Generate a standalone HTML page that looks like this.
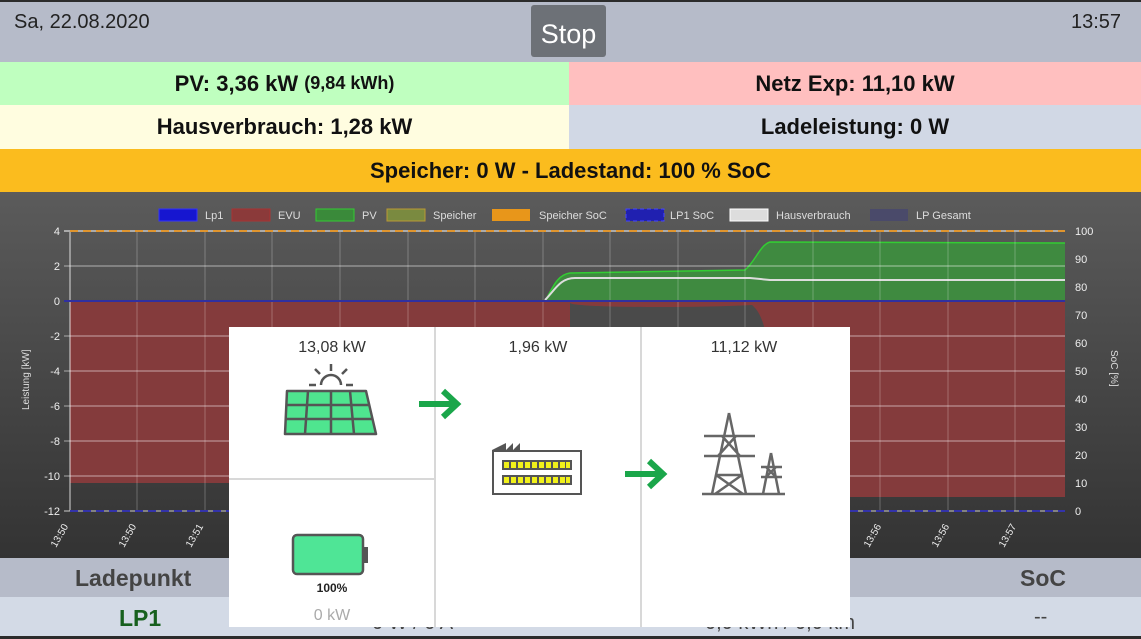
<!DOCTYPE html>
<html><head><meta charset="utf-8"><style>
*{margin:0;padding:0;box-sizing:border-box}
body{width:1141px;height:639px;overflow:hidden;background:#2b2b2b;font-family:"Liberation Sans",sans-serif;position:relative}
.abs{position:absolute}
.hdr{left:0;top:2px;width:1141px;height:60px;background:#b6bbc9}
.row{display:flex;align-items:center;justify-content:center;font-weight:bold;font-size:22px;color:#111}
</style></head><body>
<div class="abs hdr"></div>
<div class="abs" style="left:14px;top:11px;font-size:20px;color:#222">Sa, 22.08.2020</div>
<div class="abs" style="left:1071px;top:11px;font-size:20px;color:#222">13:57</div>
<div class="abs" style="left:531px;top:5px;width:75px;height:52px;background:#6d7177;border-radius:3px;color:#fff;font-size:27px;text-align:center;line-height:58px">Stop</div>
<div class="abs row" style="left:0;top:62px;width:569px;height:43px;background:#bfffbf">PV: 3,36 kW&nbsp;<span style="font-size:18px">(9,84 kWh)</span></div>
<div class="abs row" style="left:569px;top:62px;width:572px;height:43px;background:#ffbfbf">Netz Exp: 11,10 kW</div>
<div class="abs row" style="left:0;top:105px;width:569px;height:44px;background:#fffde0">Hausverbrauch: 1,28 kW</div>
<div class="abs row" style="left:569px;top:105px;width:572px;height:44px;background:#d1d8e5">Ladeleistung: 0 W</div>
<div class="abs row" style="left:0;top:149px;width:1141px;height:43px;background:#fbbc1e">Speicher: 0 W - Ladestand: 100 % SoC</div>

<svg class="abs" style="left:0;top:192px" width="1141" height="366" viewBox="0 192 1141 366" font-family="Liberation Sans, sans-serif">
<defs><linearGradient id="g" x1="0" y1="0" x2="0" y2="1"><stop offset="0" stop-color="#5b5b5b"/><stop offset="1" stop-color="#333"/></linearGradient></defs>
<rect x="0" y="192" width="1141" height="366" fill="url(#g)"/>
<g font-size="11" fill="#ddd">
<rect x="159" y="209" width="38" height="12" fill="#1616d0" stroke="#33f"/><text x="205" y="219">Lp1</text>
<rect x="232" y="209" width="38" height="12" fill="#8b3a3a" stroke="#a33"/><text x="278" y="219">EVU</text>
<rect x="316" y="209" width="38" height="12" fill="#3a8a3a" stroke="#3c3"/><text x="362" y="219">PV</text>
<rect x="387" y="209" width="38" height="12" fill="#7a8a40" stroke="#b93"/><text x="433" y="219">Speicher</text>
<rect x="492" y="209" width="38" height="12" fill="#e8961a"/><text x="539" y="219">Speicher SoC</text>
<rect x="626" y="209" width="38" height="12" fill="#2020b0" stroke="#44f" stroke-dasharray="4 3"/><text x="670" y="219">LP1 SoC</text>
<rect x="730" y="209" width="38" height="12" fill="#ddd" stroke="#fff"/><text x="776" y="219">Hausverbrauch</text>
<rect x="870" y="209" width="38" height="12" fill="#4a4a6a"/><text x="916" y="219">LP Gesamt</text>
</g>
<path d="M70 301 H1065 V497 L770 497 C765 490 762 485 755 483 L70 483 Z" fill="#843b3c"/>
<path d="M570 303 C575 308 700 308 752 305 C758 310 762 318 765 330 L570 330 Z" fill="#4a4a4a"/>
<path d="M70 301 L545 301 C552 290 556 275 570 273 L745 270 C755 262 760 245 770 242 L1065 243 V301 Z" fill="#3f8a40"/>
<path d="M545 301 C552 290 556 275 570 273 L745 270 C755 262 760 245 770 242 L1065 243" fill="none" stroke="#3c3" stroke-width="1.5"/>
<path d="M545 300 C555 290 560 278 575 278 L750 278 L770 280 L1065 280" fill="none" stroke="#ddd" stroke-width="2"/>
<g stroke="#fff" stroke-opacity=".25">
<path d="M137 232V511M205 232V511M272 232V511M340 232V511M408 232V511M475 232V511M543 232V511M610 232V511M678 232V511M745 232V511M813 232V511M880 232V511M948 232V511M1015 232V511"/>
</g>
<g stroke="#fff" stroke-opacity=".55"><path d="M64 266H1065M64 336H1065M64 371H1065M64 406H1065M64 441H1065M64 476H1065"/></g>
<path d="M70 232V511" stroke="#fff" stroke-opacity=".8"/>
<path d="M64 231H1065" stroke="#fff"/><path d="M70 231H1065" stroke="#e0952e" stroke-width="2" stroke-dasharray="8 5"/>
<path d="M64 301H1065" stroke="#3030a0" stroke-width="2"/>
<path d="M64 511H1065" stroke="#ccc"/><path d="M70 511H1065" stroke="#3333aa" stroke-width="2" stroke-dasharray="8 5"/>
<g font-size="11" fill="#eee" text-anchor="end">
<text x="60" y="235">4</text><text x="60" y="270">2</text><text x="60" y="305">0</text><text x="60" y="340">-2</text><text x="60" y="375">-4</text><text x="60" y="410">-6</text><text x="60" y="445">-8</text><text x="60" y="480">-10</text><text x="60" y="515">-12</text>
</g>
<g font-size="11" fill="#eee">
<text x="1075" y="235">100</text><text x="1075" y="263">90</text><text x="1075" y="291">80</text><text x="1075" y="319">70</text><text x="1075" y="347">60</text><text x="1075" y="375">50</text><text x="1075" y="403">40</text><text x="1075" y="431">30</text><text x="1075" y="459">20</text><text x="1075" y="487">10</text><text x="1075" y="515">0</text>
</g>
<text transform="translate(29 410) rotate(-90)" font-size="10" fill="#ddd">Leistung [kW]</text>
<text transform="translate(1111 350) rotate(90)" font-size="10" fill="#ddd">SoC [%]</text>
<g font-size="10" fill="#eee">
<text transform="translate(56 548) rotate(-60)">13:50</text>
<text transform="translate(124 548) rotate(-60)">13:50</text>
<text transform="translate(191 548) rotate(-60)">13:51</text>
<text transform="translate(869 548) rotate(-60)">13:56</text>
<text transform="translate(937 548) rotate(-60)">13:56</text>
<text transform="translate(1004 548) rotate(-60)">13:57</text>
</g>
</svg>

<div class="abs" style="left:0;top:558px;width:1141px;height:39px;background:#b6bbc9"></div>
<div class="abs" style="left:0;top:597px;width:1141px;height:39px;background:#d3dae6"></div>
<div class="abs" style="left:75px;top:565px;font-size:23px;font-weight:bold;color:#444">Ladepunkt</div>
<div class="abs" style="left:1020px;top:565px;font-size:23px;font-weight:bold;color:#444">SoC</div>
<div class="abs" style="left:119px;top:605px;font-size:23px;font-weight:bold;color:#17601e">LP1</div>
<div class="abs" style="left:1034px;top:606px;font-size:20px;color:#444">--</div>
<div class="abs" style="left:372px;top:612px;font-size:20px;color:#444">0 W / 0 A</div>
<div class="abs" style="left:705px;top:612px;font-size:20px;color:#444">0,0 kWh / 0,0 km</div>

<svg class="abs" style="left:229px;top:327px" width="621" height="300" viewBox="0 0 621 300" font-family="Liberation Sans, sans-serif">
<rect width="621" height="300" fill="#fff"/>
<path d="M206 0V300M412 0V300M0 152H206" stroke="#d8d8d8" stroke-width="2"/>
<g font-size="16" fill="#333" text-anchor="middle">
<text x="103" y="25">13,08 kW</text><text x="309" y="25">1,96 kW</text><text x="515" y="25">11,12 kW</text>
</g>
<g stroke="#555" stroke-width="2.5" fill="none">
<path d="M92 58A10 10 0 0 1 112 58"/>
<path d="M102 37V44M86 42L91 47M118 42L113 47M80 58H87M117 58H124"/>
</g>
<path d="M58 64H137L147 107H56Z" fill="#4fe58f" stroke="#555" stroke-width="2.5" stroke-linejoin="round"/>
<path d="M58 78H140M57 92H143M79 64L76 107M102 64V107M121 64L125 107" stroke="#555" stroke-width="2.5"/>
<g fill="none" stroke="#1aa64a" stroke-width="6"><path d="M190 77H226M214 64L228 77L214 90"/><path d="M396 147H432M420 134L434 147L420 160"/></g>
<path d="M263 123L277 116V123L284 116V123L291 116V123H293V124H263Z" fill="#555"/>
<rect x="264" y="124" width="88" height="43" fill="#fff" stroke="#555" stroke-width="2"/>
<rect x="273" y="133" width="70" height="10" fill="#555"/>
<rect x="273" y="148" width="70" height="10" fill="#555"/>
<g fill="#f1f11a">
<path d="M275 135h5v6h-5zM282 135h5v6h-5zM289 135h5v6h-5zM296 135h5v6h-5zM303 135h5v6h-5zM310 135h5v6h-5zM317 135h5v6h-5zM324 135h5v6h-5zM331 135h5v6h-5zM337 135h4v6h-4z"/>
<path d="M275 150h5v6h-5zM282 150h5v6h-5zM289 150h5v6h-5zM296 150h5v6h-5zM303 150h5v6h-5zM310 150h5v6h-5zM317 150h5v6h-5zM324 150h5v6h-5zM331 150h5v6h-5zM337 150h4v6h-4z"/>
</g>
<g stroke="#666" stroke-width="2.5" fill="none" stroke-linejoin="round">
<path d="M500 86L483 167M500 86L517 167M475 109H526M475 129H526M493 109L511 129M507 109L489 129M487 148L514 167M513 148L486 167M486 148H514M473 167H556"/>
<path d="M542 126L534 167M542 126L550 167M532 140H553M532 150H553M537 140L547 150M547 140L537 150"/>
</g>
<rect x="64" y="208" width="70" height="39" rx="4" fill="#4fe596" stroke="#555" stroke-width="2.5"/>
<path d="M135 220H139V236H135Z" fill="#555"/>
<text x="103" y="265" font-size="12" font-weight="bold" fill="#222" text-anchor="middle">100%</text>
<text x="103" y="293" font-size="16" fill="#aaa" text-anchor="middle">0 kW</text>
</svg>
</body></html>
